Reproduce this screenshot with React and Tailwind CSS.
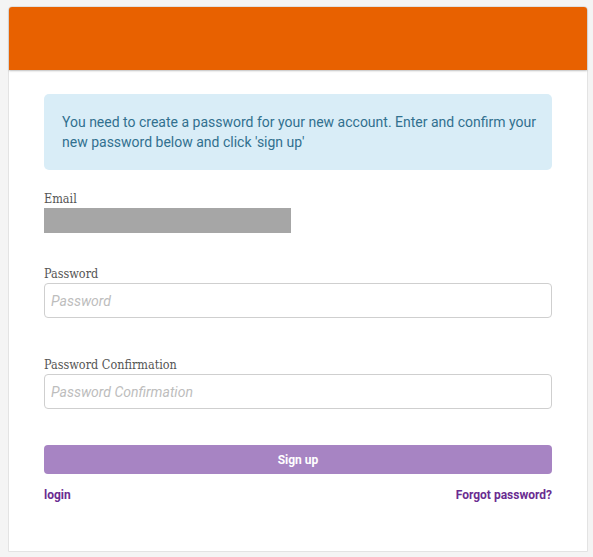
import React from "react";

const labelCls =
  "text-[12.5px] leading-[18px] text-[#555] font-['DejaVu_Serif_Condensed','DejaVu_Serif',serif] [font-stretch:condensed]";

const inputCls =
  "h-[35px] w-full border border-[#cfcfcf] rounded-[4px] px-[6px] text-[14px] placeholder:italic placeholder:text-[#bdbdbd] outline-none";

export default function App() {
  return (
    <div className="min-h-[557px] bg-[#f4f4f4] pt-[6px] pl-[8px] pr-[5px] pb-[6px] font-['Roboto',sans-serif]">
      <div className="w-[580px] h-[546px] bg-white border border-[#e3e3e3] rounded-t-[4px] flex flex-col">
        <div className="h-[63px] bg-[#e86100] rounded-t-[3px] shadow-[0_1px_2px_rgba(0,0,0,0.25)]" />

        <div className="px-[35px] pt-[24px] flex flex-col">
          <div className="bg-[#d9edf7] rounded-[5px] pl-[18px] pr-[10px] py-[18px] text-[14px] leading-[20px] text-[#31708f]">
            You need to create a password for your new account. Enter and confirm your new password below and click 'sign up'
          </div>

          <label className={"mt-[20px] " + labelCls}>Email</label>
          <div className="w-[247px] h-[25px] bg-[#a6a6a6]" />

          <label className={"mt-[32px] " + labelCls}>Password</label>
          <input type="password" placeholder="Password" className={inputCls} />

          <label className={"mt-[38px] " + labelCls}>Password Confirmation</label>
          <input type="password" placeholder="Password Confirmation" className={inputCls} />

          <button className="mt-[36px] h-[29px] w-full bg-[#a784c3] rounded-[4px] text-white text-[12px] font-bold">
            Sign up
          </button>

          <div className="mt-[13px] flex justify-between text-[12px] leading-[16px] font-bold text-[#6a2c91]">
            <a href="#">login</a>
            <a href="#">Forgot password?</a>
          </div>
        </div>
      </div>
    </div>
  );
}
